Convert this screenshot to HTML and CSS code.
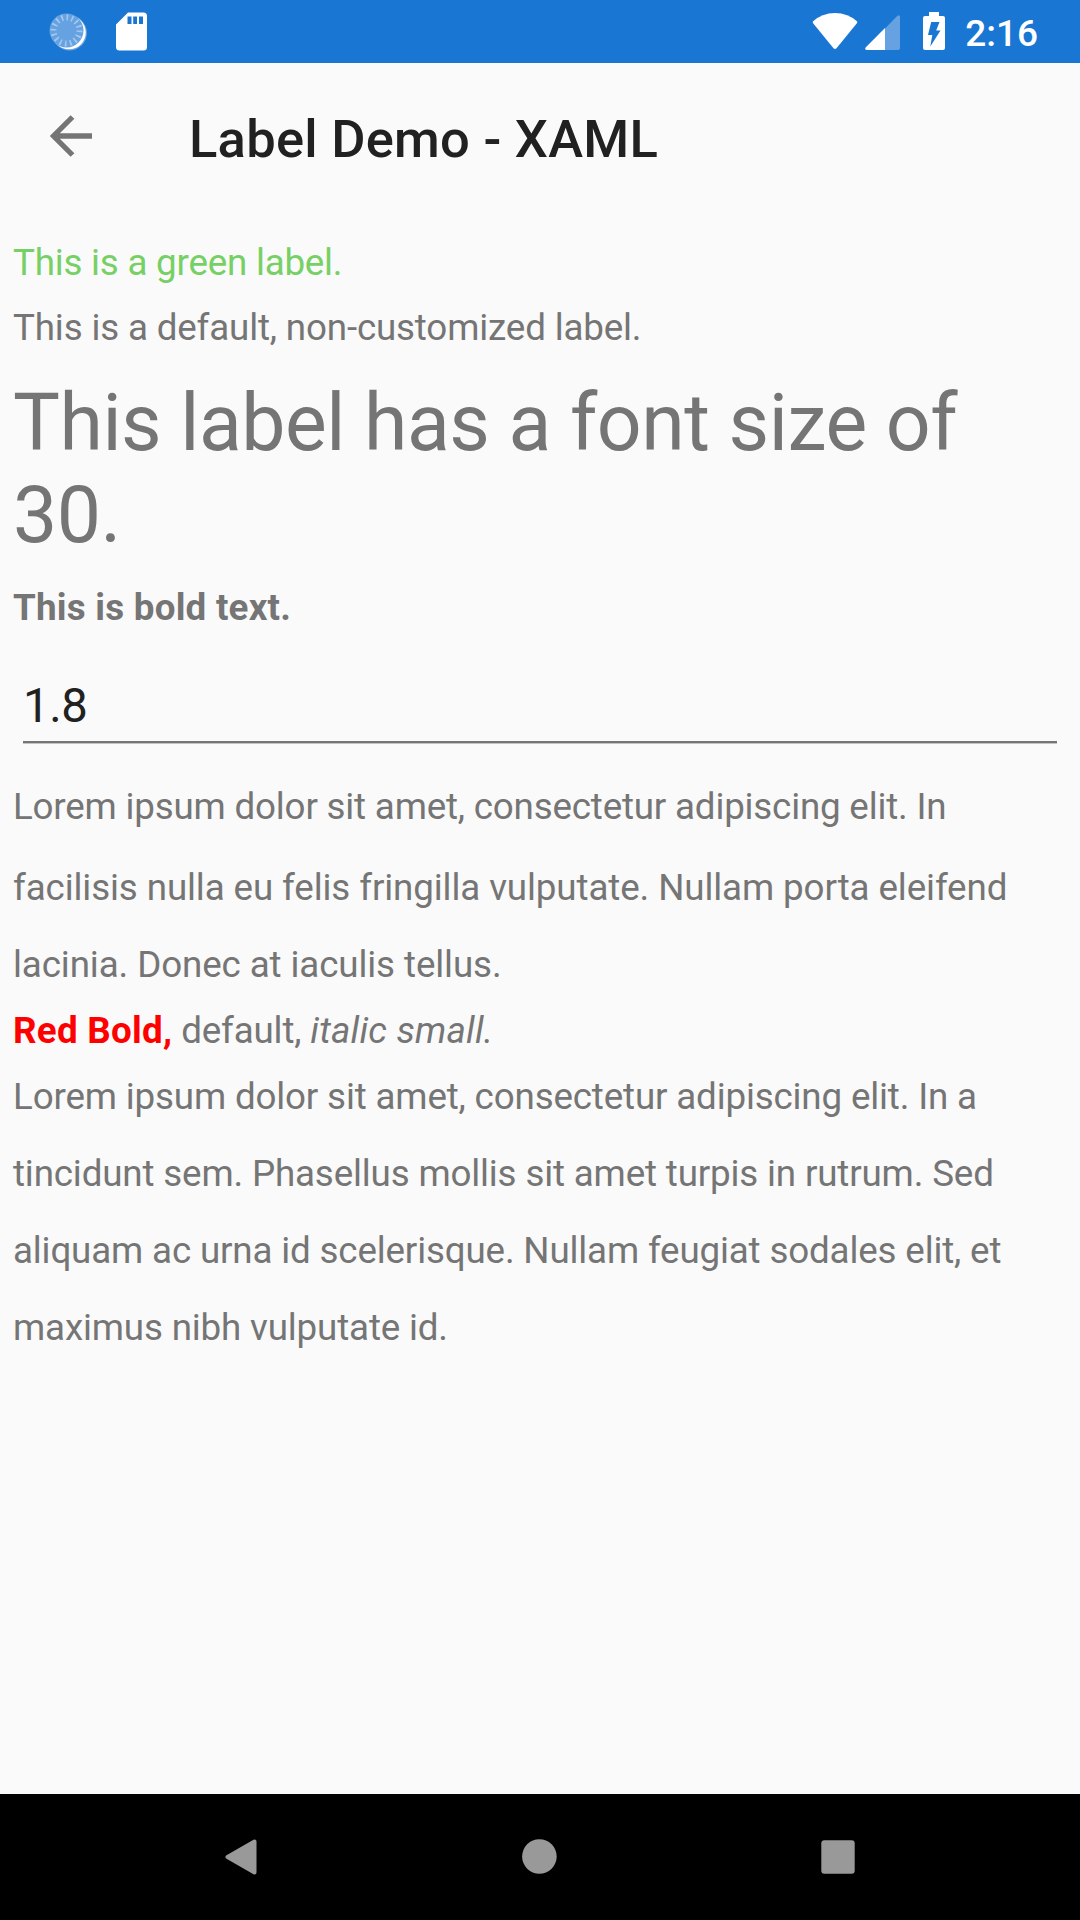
FILE: index.html
```html
<!DOCTYPE html>
<html lang="en">
<head>
<meta charset="utf-8">
<title>Label Demo - XAML</title>
<link rel="stylesheet" href="styles.css">
</head>
<body>
<div class="screen">
  <header class="status">
    <svg class="icon-sync" width="40" height="40" viewBox="0 0 40 40">
      <circle cx="20.500" cy="21" r="17.500" fill="#66a2e1"/>
      <circle cx="20" cy="20.500" r="16.800" fill="#fff"/>
      <circle cx="17.500" cy="18.500" r="17" fill="#66a2e1"/>
      <circle class="ticks" cx="17.500" cy="18.500" r="13" pathLength="64"/>
    </svg>
    <svg class="icon-sd" width="31" height="39" viewBox="0 0 31 39">
      <path fill="#fff" fill-rule="evenodd" d="M12 .5H27.500A3.500 3.500 0 0 1 31 4V35A3.500 3.500 0 0 1 27.500 38.500H3.500A3.500 3.500 0 0 1 0 35V12.500ZM11.500 4.500V12H15.500V4.500ZM17.200 4.500V12H21V4.500ZM23 4.500V12H27V4.500Z"/>
    </svg>
    <div class="status-right">
      <svg class="icon-wifi" width="46" height="37" viewBox="0 0 46 37">
        <path fill="#fff" d="M.8 8.500Q10 0 23 0T45.200 8.500Q45.500 9.500 44.700 10.500L24.500 35.200Q23 36.600 21.500 35.200L1.300 10.500Q.5 9.500 .8 8.500Z"/>
      </svg>
      <svg class="icon-signal" width="35" height="35" viewBox="0 0 35 35">
        <path fill="#66a2e1" d="M20 13.500L32.400.8Q35-1 35 2V33Q35 35 33 35H20Z"/>
        <path fill="#fff" d="M20 13V35H1.500Q-.6 34.500.6 32.400Z"/>
      </svg>
      <svg class="icon-battery" width="22" height="38" viewBox="0 0 22 38">
        <path fill="#fff" d="M6 0H16V4H20Q22 4 22 6V36Q22 38 20 38H2Q0 38 0 36V6Q0 4 2 4H6Z"/>
        <path fill="#1976d2" d="M8.200 10H16.500L13.200 18.500H17.500L7.300 34.500L9.300 23H5Z"/>
      </svg>
      <span class="time">2:16</span>
    </div>
  </header>
  <nav class="toolbar">
    <svg width="42" height="42" viewBox="0 0 42 42">
      <path d="M42 21H4M22.500 2L3.500 21L22.500 40" fill="none" stroke="#757575" stroke-width="5.300"/>
    </svg>
    <h1 class="title">Label Demo - XAML</h1>
  </nav>
  <main class="content">
    <p class="label green">This is a green label.</p>
    <p class="label plain">This is a default, non-customized label.</p>
    <p class="label large">This label has a font size of<br>30.</p>
    <p class="label bold">This is bold text.</p>
    <div class="entry">1.8</div>
    <p class="label spaced">Lorem ipsum dolor sit amet, consectetur adipiscing elit. In facilisis nulla eu felis fringilla vulputate. Nullam porta eleifend lacinia. Donec at iaculis tellus.</p>
    <p class="label mixed"><span class="red">Red Bold,</span> default, <em>italic small.</em></p>
    <p class="label airy">Lorem ipsum dolor sit amet, consectetur adipiscing elit. In a tincidunt sem. Phasellus mollis sit amet turpis in rutrum. Sed aliquam ac urna id scelerisque. Nullam feugiat sodales elit, et maximus nibh vulputate id.</p>
  </main>
  <footer class="navbar">
    <svg width="32" height="36" viewBox="0 0 32 36">
      <path d="M29.500 2.500V33.500L2.500 18Z" fill="#999" stroke="#999" stroke-width="4" stroke-linejoin="round"/>
    </svg>
    <svg class="home" width="36" height="36" viewBox="0 0 36 36"><circle cx="18.400" cy="17.500" r="17.300" fill="#999"/></svg>
    <svg width="34" height="34" viewBox="0 0 34 34"><rect x=".3" y=".3" width="33.400" height="33.400" rx="3" fill="#999"/></svg>
  </footer>
</div>
</body>
</html>
```
FILE: styles.css
```css
* { box-sizing: border-box; }

body {
  margin: 0;
  font-family: Roboto, "Noto Sans", sans-serif;
  background: #fafafa;
}

.screen {
  display: flex;
  flex-direction: column;
  width: 1080px;
  height: 1920px;
}

.status {
  display: flex;
  align-items: flex-start;
  height: 63px;
  padding: 12px 42px 0 49px;
  background: #1976d2;
  color: #fff;
}
.icon-sync { margin-right: 27px; }
.ticks {
  fill: none;
  stroke: #a3c8ee;
  stroke-width: 6;
  stroke-dasharray: 1.3 2.7;
}
.status-right { display: flex; margin-left: auto; }
.icon-wifi { margin: 1px 7px 0 0; }
.icon-signal { margin: 3px 23px 0 0; }
.icon-battery { margin-right: 20px; }
.time {
  font-size: 37px;
  font-weight: 500;
  line-height: 43px;
}

.toolbar {
  display: flex;
  align-items: flex-start;
  gap: 97px;
  height: 147px;
  padding: 52px 50px 0;
}
.title {
  margin: 0;
  color: #212121;
  font-size: 52.5px;
  font-weight: 500;
  line-height: 48px;
  letter-spacing: .25px;
}

.content {
  flex: 1;
  padding: 28px 13px 0;
  color: #757575;
}
.label {
  margin: 0;
  font-size: 36.75px;
  line-height: 50px;
  letter-spacing: -.16px;
}
.green { color: #77d065; letter-spacing: -.22px; }
.plain { margin-top: 15px; }
.large {
  margin-top: 24px;
  font-size: 78.75px;
  line-height: 92px;
  letter-spacing: -.48px;
}
.bold { margin-top: 22px; font-weight: 700; letter-spacing: .24px; }
.entry {
  height: 65px;
  margin: 45px 10px 21px;
  border-bottom: 2px solid #757575;
  box-shadow: 0 1px 0 #c4c4c4;
  color: #212121;
  font-size: 47.25px;
  line-height: 56px;
  letter-spacing: -.4px;
}
.spaced { line-height: 77px; letter-spacing: -.11px; }
.spaced::first-line { line-height: 85px; letter-spacing: -.19px; }
.mixed { margin-top: 3px; }
.mixed em { letter-spacing: .2px; }
.red { color: #f00; font-weight: 700; letter-spacing: .26px; }
.airy { margin-top: 2px; line-height: 77px; }

.navbar {
  display: flex;
  align-items: center;
  justify-content: space-between;
  height: 126px;
  padding: 0 225px;
  background: #000;
}
```
